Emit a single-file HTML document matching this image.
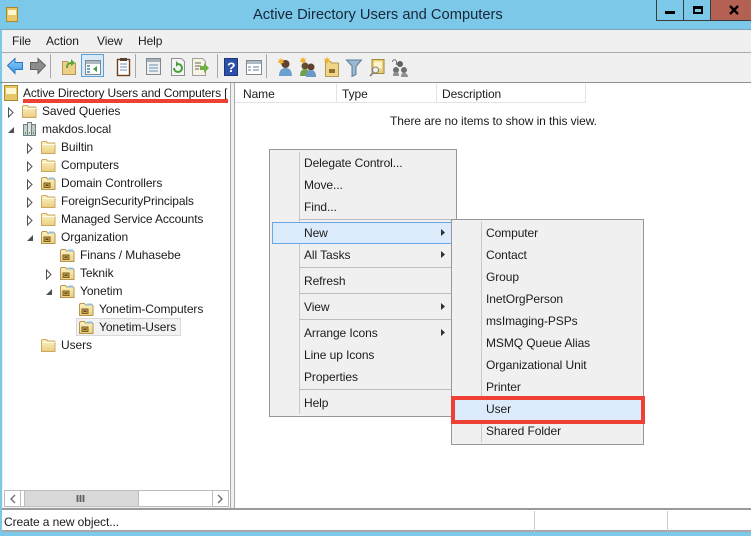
<!DOCTYPE html>
<html><head><meta charset="utf-8"><style>
html,body{margin:0;padding:0}
body{width:751px;height:536px;overflow:hidden;position:relative;background:#7cc8e8;font:12px "Liberation Sans",sans-serif;color:#1c1c1c;letter-spacing:-.08px}
div,span.t,svg{position:absolute}
.t{position:absolute;white-space:nowrap;line-height:16px;height:16px}
svg{overflow:visible}
</style></head><body>
<svg width="0" height="0" style="position:absolute">
<defs>
<linearGradient id="fg" x1="0" y1="0" x2="0" y2="1"><stop offset="0" stop-color="#fdf3c4"/><stop offset="1" stop-color="#eccd80"/></linearGradient>
<linearGradient id="bl" x1="0" y1="0" x2="0" y2="1"><stop offset="0" stop-color="#8fd0fa"/><stop offset="1" stop-color="#3c94e4"/></linearGradient>
<symbol id="folder" viewBox="0 0 16 16"><path d="M1.5 14.5V3.5l1-1h4l1 1.5h7l.5 1v9.5z" fill="url(#fg)" stroke="#c8a860"/><path d="M2 5.5h13" stroke="#fffbe6"/></symbol>
<symbol id="ou" viewBox="0 0 16 16"><path d="M1.5 14.5V3.5l1-1h4l1 1.5h7l.5 1v9.5z" fill="url(#fg)" stroke="#b8964e"/><path d="M9 2.5h5v2H9z" fill="#8cc0e0"/><rect x="4" y="8" width="6" height="4.5" fill="#c9a24c" stroke="#7a6020"/><rect x="5.5" y="9.5" width="3" height="1.5" fill="#5a4818"/></symbol>
</defs></svg>

<!-- title bar -->
<div style="left:0;top:29px;width:751px;height:1px;background:#7aa6ba"></div>
<svg style="left:6px;top:7px" width="12" height="15"><rect x=".5" y=".5" width="11" height="14" fill="#e8c868" stroke="#a88830"/><rect x="2" y="3" width="8" height="5" fill="#fdf6d0"/></svg>
<span class="t" style="left:253px;top:6px;font-size:14.7px;line-height:18px;height:18px;color:#16283a;letter-spacing:0">Active Directory Users and Computers</span>
<div style="left:656px;top:0;width:28px;height:21px;border:1px solid #3c3c3c;border-top:0;box-sizing:border-box;background:#7cc8e8"></div>
<div style="left:683px;top:0;width:28px;height:21px;border:1px solid #3c3c3c;border-top:0;box-sizing:border-box;background:#7cc8e8"></div>
<div style="left:711px;top:0;width:40px;height:21px;background:#b46052;border-bottom:1px solid #3c3c3c;box-sizing:border-box"></div>
<div style="left:665px;top:11px;width:10px;height:3px;background:#000"></div>
<div style="left:693px;top:6px;width:10px;height:8px;border:2px solid #000;border-top-width:3px;box-sizing:border-box"></div>
<svg style="left:729px;top:5px" width="11" height="10"><path d="M1 1l8 8M9 1l-8 8" stroke="#000" stroke-width="2.4" fill="none"/></svg>

<!-- menu + toolbar -->
<div style="left:2px;top:30px;width:749px;height:52px;background:#f0f0f0"></div>
<div style="left:2px;top:52px;width:749px;height:1px;background:#ababab"></div>
<div style="left:0;top:82px;width:751px;height:1px;background:#8a9296"></div>
<span class="t" style="left:12px;top:33px">File</span>
<span class="t" style="left:46px;top:33px">Action</span>
<span class="t" style="left:97px;top:33px">View</span>
<span class="t" style="left:138px;top:33px">Help</span>

<!-- toolbar icons -->
<svg style="left:0;top:52px" width="420" height="30">
 <path d="M7.5 13.5L15 6.5v4h7.5v7H15v4z" fill="url(#bl)" stroke="#2a78c0"/>
 <path d="M45.5 13.5L38 6.5v4h-7.5v7H38v4z" fill="#8c8c8c" stroke="#606060"/>
 <path d="M50.5 2v24M135.5 2v24M266.5 2v24" stroke="#a8a8a8"/>
 <path d="M62.5 22.5V9.5h5l1 1.5h7v11.5z" fill="#ecd088" stroke="#b89850"/>
 <path d="M66 16c0-4 2-6 5-6V7l4 4-4 3v-2c-2 0-3 1-3 4z" fill="#58a838"/>
 <rect x="81.5" y="2.5" width="22" height="22" fill="#d8eaf8" stroke="#5aa0d8"/>
 <rect x="85.5" y="8.5" width="15" height="14" fill="#fff" stroke="#808890"/><rect x="86" y="9" width="14" height="3" fill="#b0b8c0"/>
 <path d="M87 14h3M87 17h3M87 20h3" stroke="#4a7ab0" stroke-width="1.5"/><path d="M97 14v6l-4-3z" fill="#40a040"/>
 <rect x="117.5" y="7.5" width="12" height="16" fill="#fff" stroke="#704020" stroke-width="1.4"/><rect x="120" y="6" width="7" height="3" fill="#5a4030"/>
 <path d="M120 12h7M120 15h7M120 18h7" stroke="#7090b0"/>
 <rect x="146.5" y="6.5" width="14" height="16" fill="#f0f0f0" stroke="#808890"/><rect x="147" y="7" width="13" height="3" fill="#a8b0b8"/><path d="M149 13h9M149 16h9M149 19h9" stroke="#6890b8"/>
 <path d="M171.5 6.5h10l3 3v14h-13z" fill="#f4f4f4" stroke="#909090"/><path d="M174 16a4 4 0 1 0 4-4" stroke="#48a038" stroke-width="2" fill="none"/><path d="M176 9l3 3-3 3z" fill="#48a038"/>
 <path d="M192.5 6.5h10l3 3v14h-13z" fill="#f8f4e4" stroke="#a0a0a0"/><path d="M195 11h6M195 14h6M195 17h4" stroke="#606060"/><path d="M200 14h4v-3l5 5-5 5v-3h-4z" fill="#70b040"/>
 <path d="M217.500 2v24" stroke="#a8a8a8"/>
 <rect x="224.500" y="6.500" width="13" height="17" fill="#2c50a8" stroke="#1c3478"/>
 <rect x="246.500" y="8.500" width="15" height="14" fill="#fff" stroke="#808890"/><rect x="247" y="9" width="14" height="3" fill="#b0b8c0"/><path d="M248 15h3M248 18h3M253 15h6M253 18h6" stroke="#6080a0"/>
 <circle cx="285.500" cy="12" r="4" fill="#604030"/><path d="M279 24c0-6 3-8 6.500-8s6.500 2 6.500 8z" fill="#6aa0d0"/><path d="M278 7l2 1 1-2 1 2 2-1-1 2 1 2-2 0-1 2-1-2-2 0 1-2z" fill="#f0b030"/>
 <circle cx="305" cy="14" r="3.500" fill="#605030"/><path d="M300 24c0-5 2-7 5-7s5 2 5 7z" fill="#70a050"/><circle cx="311" cy="15" r="3.500" fill="#604030"/><path d="M306 25c0-5 2-7 5-7s5 2 5 7z" fill="#6a98c8"/><path d="M300 6l2 1 1-2 1 2 2-1-1 2 1 2-2 0-1 2-1-2-2 0 1-2z" fill="#f0b030"/>
 <path d="M325.500 24.500V9.500h5l1 1.500h7v13.500z" fill="#f0d488" stroke="#b89850"/><rect x="329" y="17" width="6" height="4" fill="#8c7030"/><path d="M324 6l2 1 1-2 1 2 2-1-1 2 1 2-2 0-1 2-1-2-2 0 1-2z" fill="#f0b030"/>
 <path d="M346.500 8h15l-5.500 6.500v8l-4 2v-10.500z" fill="#9ab8d0" stroke="#5c7c98"/>
 <rect x="372" y="7.500" width="12" height="14" fill="#e8d080" stroke="#a08830"/><rect x="374" y="9.500" width="8" height="7" fill="#fdf4c8"/><circle cx="375.500" cy="18" r="3" fill="#f0f0f0" stroke="#808080"/><path d="M373 21l-3 3" stroke="#808080" stroke-width="1.600"/>
 <path d="M392.500 10c0-3 4-3 4 0v3" stroke="#707070" fill="none"/><circle cx="400" cy="12" r="3" fill="#606060"/><circle cx="396" cy="18" r="3" fill="#707070"/><circle cx="404" cy="18" r="3" fill="#707070"/><path d="M393 24c0-3 1-4 3-4s3 1 3 4zM401 25c0-3 1-4 3-4s4 1 4 4z" fill="#909090"/>
</svg>
<span class="t" style="left:227px;top:59px;font-weight:bold;font-size:14px;color:#fff">?</span>

<!-- tree pane -->
<div style="left:2px;top:83px;width:229px;height:425px;background:#f0f0f0"></div>
<div style="left:3px;top:83px;width:227px;height:424px;background:#fff"></div>
<div style="left:230px;top:83px;width:1px;height:425px;background:#a8a8a8"></div>
<div style="left:234px;top:83px;width:517px;height:425px;background:#fff;border-left:1px solid #a8a8a8;box-sizing:border-box"></div>
<div style="left:231px;top:83px;width:3px;height:425px;background:#f0f0f0"></div>

<svg style="left:4px;top:85px" width="15" height="16"><rect x=".5" y=".5" width="13" height="15" fill="#e6c666" stroke="#a88830"/><rect x="2" y="3" width="10" height="6" fill="#fdf6d0"/></svg>
<span class="t" style="left:23px;top:85px;letter-spacing:-.17px;width:205px;overflow:hidden">Active Directory Users and Computers [</span>
<div style="left:23px;top:99px;width:205px;height:4px;background:#ee4035"></div>

<span class="t" style="left:42px;top:103px">Saved Queries</span>
<span class="t" style="left:42px;top:121px">makdos.local</span>
<span class="t" style="left:61px;top:139px">Builtin</span>
<span class="t" style="left:61px;top:157px">Computers</span>
<span class="t" style="left:61px;top:175px">Domain Controllers</span>
<span class="t" style="left:61px;top:193px;letter-spacing:-.13px">ForeignSecurityPrincipals</span>
<span class="t" style="left:61px;top:211px;letter-spacing:-.13px">Managed Service Accounts</span>
<span class="t" style="left:61px;top:229px">Organization</span>
<span class="t" style="left:80px;top:247px">Finans / Muhasebe</span>
<span class="t" style="left:80px;top:265px">Teknik</span>
<span class="t" style="left:80px;top:283px">Yonetim</span>
<span class="t" style="left:99px;top:301px">Yonetim-Computers</span>
<div style="left:76px;top:318px;width:105px;height:18px;background:#f2f2f2;border:1px solid #d9d9d9;box-sizing:border-box"></div>
<span class="t" style="left:99px;top:319px">Yonetim-Users</span>
<span class="t" style="left:61px;top:337px">Users</span>

<svg style="left:21px;top:103px" width="16" height="16"><use href="#folder" width="16" height="16"/></svg>
<svg style="left:21px;top:121px" width="16" height="16"><rect x="2.500" y="3.500" width="4" height="11" fill="#c8d0d0" stroke="#708080"/><rect x="6.500" y="1.500" width="4" height="13" fill="#dde2e2" stroke="#708080"/><rect x="10.500" y="3.500" width="4" height="11" fill="#c0c8c8" stroke="#708080"/><path d="M4 12h1M8 12h1M12 12h1" stroke="#50b040" stroke-width="2"/></svg>
<svg style="left:40px;top:139px" width="16" height="16"><use href="#folder" width="16" height="16"/></svg>
<svg style="left:40px;top:157px" width="16" height="16"><use href="#folder" width="16" height="16"/></svg>
<svg style="left:40px;top:175px" width="16" height="16"><use href="#ou" width="16" height="16"/></svg>
<svg style="left:40px;top:193px" width="16" height="16"><use href="#folder" width="16" height="16"/></svg>
<svg style="left:40px;top:211px" width="16" height="16"><use href="#folder" width="16" height="16"/></svg>
<svg style="left:40px;top:229px" width="16" height="16"><use href="#ou" width="16" height="16"/></svg>
<svg style="left:59px;top:247px" width="16" height="16"><use href="#ou" width="16" height="16"/></svg>
<svg style="left:59px;top:265px" width="16" height="16"><use href="#ou" width="16" height="16"/></svg>
<svg style="left:59px;top:283px" width="16" height="16"><use href="#ou" width="16" height="16"/></svg>
<svg style="left:78px;top:301px" width="16" height="16"><use href="#ou" width="16" height="16"/></svg>
<svg style="left:78px;top:319px" width="16" height="16"><use href="#ou" width="16" height="16"/></svg>
<svg style="left:40px;top:337px" width="16" height="16"><use href="#folder" width="16" height="16"/></svg>

<!-- expanders -->
<svg style="left:0;top:83px" width="70" height="230">
 <g fill="#fff" stroke="#505050">
 <path d="M8.500 25v9l4.500-4.500z"/><path d="M27.500 61v9l4.500-4.500z"/><path d="M27.500 79v9l4.500-4.500z"/><path d="M27.500 97v9l4.500-4.500z"/><path d="M27.500 115v9l4.500-4.500z"/><path d="M27.500 133v9l4.500-4.500z"/><path d="M46.500 187v9l4.500-4.500z"/>
 </g>
 <g fill="#505050"><path d="M8 50h6v-6z"/><path d="M27 158h6v-6z"/><path d="M46 212h6v-6z"/></g>
</svg>

<!-- scrollbar -->
<div style="left:4px;top:490px;width:225px;height:17px;background:#fff;border:1px solid #bdbdbd;box-sizing:border-box"></div>
<div style="left:20px;top:490px;width:1px;height:17px;background:#bdbdbd"></div>
<div style="left:24px;top:490px;width:115px;height:17px;background:#d9d9d9;border:1px solid #bdbdbd;box-sizing:border-box"></div>
<div style="left:212px;top:490px;width:1px;height:17px;background:#bdbdbd"></div>
<svg style="left:0;top:490px" width="230" height="17">
 <path d="M15 5l-4 4 4 4M218 5l4 4-4 4" stroke="#707070" stroke-width="1.400" fill="none"/>
 <path d="M77.500 5v7M80.500 5v7M83.500 5v7" stroke="#606060" stroke-width="1.800"/>
</svg>

<!-- status -->
<div style="left:2px;top:508px;width:749px;height:24px;background:#fff;border-top:2px solid #9a9a9a;border-bottom:2px solid #a8a8a8;box-sizing:border-box"></div>
<div style="left:534px;top:511px;width:1px;height:20px;background:#ccc"></div>
<div style="left:667px;top:511px;width:1px;height:20px;background:#ccc"></div>
<span class="t" style="left:4px;top:514px">Create a new object...</span>

<!-- list headers -->
<div style="left:235px;top:102px;width:351px;height:1px;background:#e3e3e3"></div>
<div style="left:336px;top:84px;width:1px;height:18px;background:#e3e3e3"></div>
<div style="left:436px;top:84px;width:1px;height:18px;background:#e3e3e3"></div>
<div style="left:585px;top:84px;width:1px;height:18px;background:#e3e3e3"></div>
<span class="t" style="left:243px;top:86px">Name</span>
<span class="t" style="left:342px;top:86px">Type</span>
<span class="t" style="left:442px;top:86px">Description</span>
<span class="t" style="left:390px;top:113px">There are no items to show in this view.</span>

<!-- context menu -->
<div style="left:269px;top:149px;width:188px;height:268px;background:#f0f0f0;border:1px solid #979797;box-sizing:border-box"></div>
<div style="left:299px;top:152px;width:1px;height:262px;background:#c8c8c8"></div>
<div style="left:299px;top:219px;width:158px;height:1px;background:#bdbdbd"></div>
<div style="left:299px;top:267px;width:152px;height:1px;background:#bdbdbd"></div>
<div style="left:299px;top:293px;width:152px;height:1px;background:#bdbdbd"></div>
<div style="left:299px;top:319px;width:152px;height:1px;background:#bdbdbd"></div>
<div style="left:299px;top:389px;width:152px;height:1px;background:#bdbdbd"></div>
<div style="left:272px;top:222px;width:180px;height:22px;background:#dcebfc;border:1px solid #66a7e8;box-sizing:border-box"></div>
<span class="t" style="left:304px;top:155px">Delegate Control...</span>
<span class="t" style="left:304px;top:177px">Move...</span>
<span class="t" style="left:304px;top:199px">Find...</span>
<span class="t" style="left:304px;top:225px">New</span>
<span class="t" style="left:304px;top:247px">All Tasks</span>
<span class="t" style="left:304px;top:273px">Refresh</span>
<span class="t" style="left:304px;top:299px">View</span>
<span class="t" style="left:304px;top:325px">Arrange Icons</span>
<span class="t" style="left:304px;top:347px">Line up Icons</span>
<span class="t" style="left:304px;top:369px">Properties</span>
<span class="t" style="left:304px;top:395px">Help</span>
<svg style="left:441px;top:0" width="6" height="340" fill="#303030"><path d="M0 229v7l4-3.500zM0 251v7l4-3.500zM0 303v7l4-3.500zM0 329v7l4-3.500z"/></svg>

<!-- submenu -->
<div style="left:451px;top:219px;width:193px;height:226px;background:#f0f0f0;border:1px solid #979797;box-sizing:border-box"></div>
<div style="left:481px;top:222px;width:1px;height:220px;background:#c8c8c8"></div>
<span class="t" style="left:486px;top:225px">Computer</span>
<span class="t" style="left:486px;top:247px">Contact</span>
<span class="t" style="left:486px;top:269px">Group</span>
<span class="t" style="left:486px;top:291px">InetOrgPerson</span>
<span class="t" style="left:486px;top:313px">msImaging-PSPs</span>
<span class="t" style="left:486px;top:335px">MSMQ Queue Alias</span>
<span class="t" style="left:486px;top:357px">Organizational Unit</span>
<span class="t" style="left:486px;top:379px">Printer</span>
<div style="left:451px;top:396px;width:194px;height:28px;background:#dcebfc;border:4px solid #ee4035;box-sizing:border-box"></div>
<span class="t" style="left:486px;top:401px">User</span>
<span class="t" style="left:486px;top:423px">Shared Folder</span>
</body></html>
